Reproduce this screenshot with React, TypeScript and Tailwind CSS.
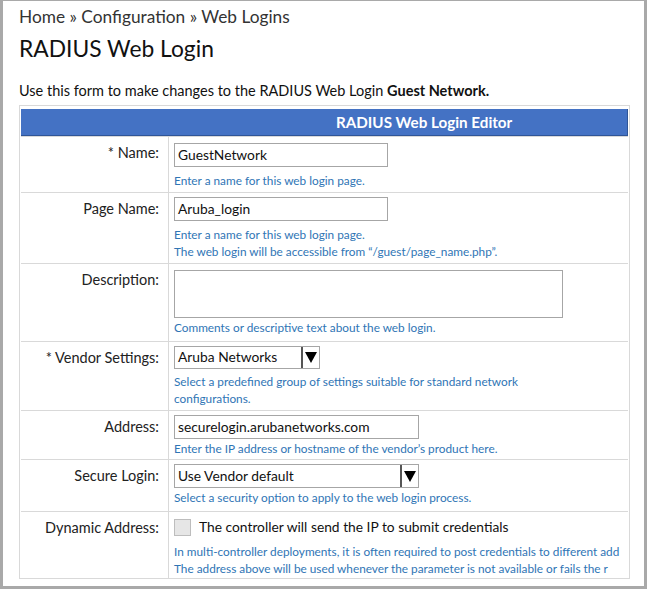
import React from 'react';

// 入力欄の右端にある ▼ ボタン
function Arrow() {
  return (
    <div className="ml-auto flex h-full w-[18px] items-center justify-center border-l-2 border-[#555] bg-white">
      <svg width="12" height="11" viewBox="0 0 12 11">
        <polygon points="0,0 12,0 6,11" fill="#000" />
      </svg>
    </div>
  );
}

function Hint({ children }: { children: React.ReactNode }) {
  return (
    <div className="whitespace-nowrap text-[11.8px] leading-[17px] text-[#2f75b5]">{children}</div>
  );
}

interface RowProps {
  label: string;
  height: string;
  children: React.ReactNode;
}

function Row({ label, height, children }: RowProps) {
  return (
    <div className={`flex border-t border-[#d9d9d9] ${height}`}>
      <div className="w-[148px] shrink-0 border-r border-[#d9d9d9] pr-[9px] pt-[6px] text-right text-[14.5px] leading-[20px] text-[#222]">
        {label}
      </div>
      <div className="min-w-0 flex-1 overflow-hidden pl-[5px] pt-[4px]">{children}</div>
    </div>
  );
}

export default function App() {
  return (
    <div
      className="h-[592px] w-[649px] bg-white"
      style={{ fontFamily: 'Lato, "Open Sans", sans-serif' }}
    >
      <div className="h-[589px] w-[647px] border-[3px] border-t border-[#a9a9a9] bg-white pl-[16px] pr-[14px]">
        <div className="pt-[5px] text-[17.3px] leading-[22px] text-[#333]">
          Home » Configuration » Web Logins
        </div>
        <div className="mt-[5px] text-[22.8px] leading-[30px] text-[#111]">RADIUS Web Login</div>
        <div className="mt-[18px] text-[14.5px] leading-[20px] text-[#111]">
          Use this form to make changes to the RADIUS Web Login <b>Guest Network.</b>
        </div>

        <div className="mt-[4px] border border-[#d9d9d9] px-[1px] pt-[3px]">
          <div className="h-[27px] border-b border-r border-[#2f5597] bg-[#4472c4] pl-[315px] text-[15.2px] font-bold leading-[26px] text-white">
            RADIUS Web Login Editor
          </div>

          <Row label="* Name:" height="h-[56px]">
            <div className="mt-[2px] h-[24px] w-[214px] border border-[#a6a6a6] px-[3px] text-[13.8px] leading-[22px] text-[#111]">
              GuestNetwork
            </div>
            <div className="mt-[5px]">
              <Hint>Enter a name for this web login page.</Hint>
            </div>
          </Row>

          <Row label="Page Name:" height="h-[71px]">
            <div className="h-[24px] w-[214px] border border-[#a6a6a6] px-[3px] text-[13.8px] leading-[22px] text-[#111]">
              Aruba_login
            </div>
            <div className="mt-[5px]">
              <Hint>Enter a name for this web login page.</Hint>
              <Hint>The web login will be accessible from “/guest/page_name.php”.</Hint>
            </div>
          </Row>

          <Row label="Description:" height="h-[78px]">
            <div className="mt-[2px] h-[48px] w-[389px] border border-[#a6a6a6]" />
            <div className="mt-[1px]">
              <Hint>Comments or descriptive text about the web login.</Hint>
            </div>
          </Row>

          <Row label="* Vendor Settings:" height="h-[69px]">
            <div className="flex h-[23px] w-[146px] items-center border border-[#a6a6a6] pl-[3px] text-[13.8px] text-[#111]">
              <span>Aruba Networks</span>
              <Arrow />
            </div>
            <div className="mt-[4px]">
              <Hint>Select a predefined group of settings suitable for standard network</Hint>
              <Hint>configurations.</Hint>
            </div>
          </Row>

          <Row label="Address:" height="h-[49px]">
            <div className="h-[24px] w-[245px] border border-[#a6a6a6] px-[3px] text-[13.8px] leading-[22px] text-[#111]">
              securelogin.arubanetworks.com
            </div>
            <div className="mt-[1px]">
              <Hint>Enter the IP address or hostname of the vendor’s product here.</Hint>
            </div>
          </Row>

          <Row label="Secure Login:" height="h-[52px]">
            <div className="flex h-[24px] w-[245px] items-center border border-[#a6a6a6] pl-[3px] text-[13.8px] text-[#111]">
              <span>Use Vendor default</span>
              <Arrow />
            </div>
            <div className="mt-[1px]">
              <Hint>Select a security option to apply to the web login process.</Hint>
            </div>
          </Row>

          <Row label="Dynamic Address:" height="h-[67px]">
            <div className="mt-[1px] flex items-center gap-[8px]">
              <div className="h-[17px] w-[17px] border border-[#bdbdbd] bg-[#e6e6e6]" />
              <span className="text-[13.8px] leading-[20px] text-[#111]">
                The controller will send the IP to submit credentials
              </span>
            </div>
            <div className="mt-[6px]">
              <Hint>In multi-controller deployments, it is often required to post credentials to different add</Hint>
              <Hint>The address above will be used whenever the parameter is not available or fails the r</Hint>
            </div>
          </Row>
        </div>
      </div>
    </div>
  );
}
